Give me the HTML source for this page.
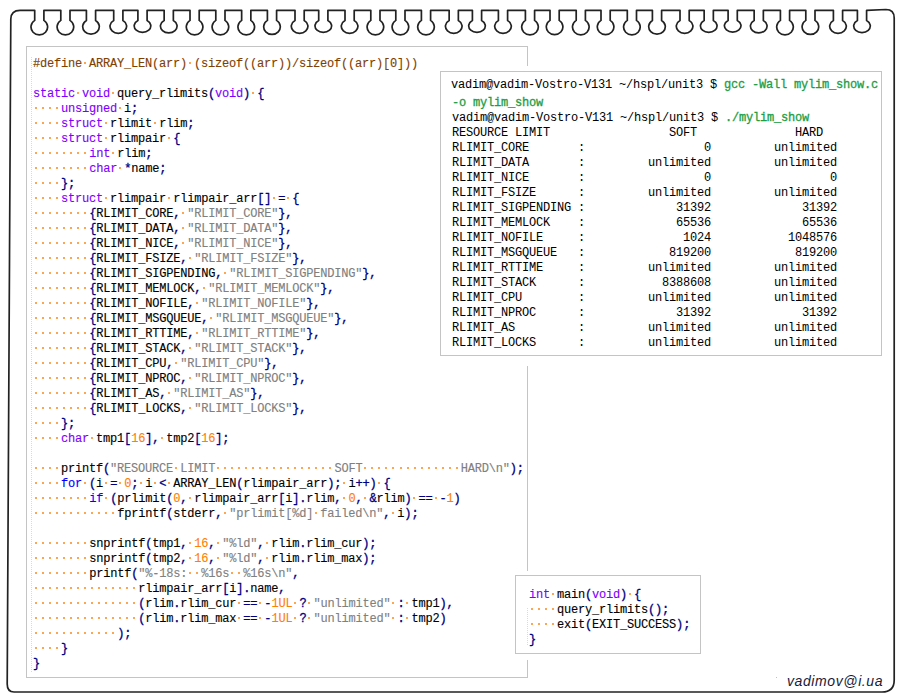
<!DOCTYPE html>
<html><head><meta charset="utf-8"><style>
html,body{margin:0;padding:0;background:#fff;}
body{width:900px;height:700px;overflow:hidden;position:relative;}
.nb{position:absolute;left:0;top:0;}
.panel{position:absolute;box-sizing:border-box;border:1px solid #c4c4c4;background:#fff;}
.wpad{position:absolute;background:#fff;}
.guide{position:absolute;width:1px;background:repeating-linear-gradient(to bottom,#dadada 0,#dadada 1px,transparent 1px,transparent 2px);}
.code,.term{position:absolute;font-family:"Liberation Mono",monospace;font-size:12px;letter-spacing:-0.200px;white-space:pre;color:#000;-webkit-text-stroke:0.12px currentColor;}
.term{-webkit-text-stroke:0px;}
.ln{position:absolute;left:0;height:15px;line-height:15px;white-space:pre;}
.pp{color:#804000}
.ty{color:#8000ff}
.in{color:#0000ff}
.nu{color:#ff8000}
.st{color:#808080}
.op{color:#000080;-webkit-text-stroke:0.3px #000080}
.gr{color:#1c9e44;-webkit-text-stroke:0.3px #1c9e44}
i.d{font-style:normal;position:relative;}
i.d::after{content:"";position:absolute;left:2px;top:5px;width:2px;height:2px;background:#ffa54f;}
.sig{position:absolute;left:787px;top:672px;font-family:"Liberation Sans",sans-serif;font-style:italic;font-size:14px;letter-spacing:0.6px;line-height:18px;color:#1a1a3a;}
</style></head><body>
<svg class="nb" width="900" height="700" viewBox="0 0 900 700"><path d="M10.8,19 Q11,10.3 20,10.3 L34.70,10.3 L34.70,20.40 A8.3,7.94 0 1 0 43.90,20.40 L43.90,10.3 L60.80,10.3 L60.80,20.40 A8.3,7.94 0 1 0 70.00,20.40 L70.00,10.3 L86.40,10.3 L86.40,20.40 A8.3,7.50 0 1 0 95.60,20.40 L95.60,10.3 L113.70,10.3 L113.70,20.40 A8.3,7.07 0 1 0 122.90,20.40 L122.90,10.3 L137.90,10.3 L137.90,20.40 A8.3,6.58 0 1 0 147.10,20.40 L147.10,10.3 L164.15,10.3 L164.15,20.40 A8.3,6.79 0 1 0 173.35,20.40 L173.35,10.3 L190.00,10.3 L190.00,20.40 A8.3,7.94 0 1 0 199.20,20.40 L199.20,10.3 L215.80,10.3 L215.80,20.40 A8.3,7.94 0 1 0 225.00,20.40 L225.00,10.3 L241.65,10.3 L241.65,20.40 A8.3,7.94 0 1 0 250.85,20.40 L250.85,10.3 L267.40,10.3 L267.40,20.40 A8.3,7.67 0 1 0 276.60,20.40 L276.60,10.3 L295.00,10.3 L295.00,20.40 A8.3,7.07 0 1 0 304.20,20.40 L304.20,10.3 L318.70,10.3 L318.70,20.40 A8.3,6.58 0 1 0 327.90,20.40 L327.90,10.3 L345.00,10.3 L345.00,20.40 A8.3,7.07 0 1 0 354.20,20.40 L354.20,10.3 L370.80,10.3 L370.80,20.40 A8.3,7.94 0 1 0 380.00,20.40 L380.00,10.3 L395.80,10.3 L395.80,20.40 A8.3,7.94 0 1 0 405.00,20.40 L405.00,10.3 L421.40,10.3 L421.40,20.40 A8.3,7.94 0 1 0 430.60,20.40 L430.60,10.3 L449.15,10.3 L449.15,20.40 A8.3,7.07 0 1 0 458.35,20.40 L458.35,10.3 L472.40,10.3 L472.40,20.40 A8.3,6.58 0 1 0 481.60,20.40 L481.60,10.3 L498.40,10.3 L498.40,20.40 A8.3,7.07 0 1 0 507.60,20.40 L507.60,10.3 L525.40,10.3 L525.40,20.40 A8.3,7.94 0 1 0 534.60,20.40 L534.60,10.3 L550.00,10.3 L550.00,20.40 A8.3,7.78 0 1 0 559.20,20.40 L559.20,10.3 L576.20,10.3 L576.20,20.40 A8.3,7.94 0 1 0 585.40,20.40 L585.40,10.3 L601.00,10.3 L601.00,20.40 A8.3,7.78 0 1 0 610.20,20.40 L610.20,10.3 L627.30,10.3 L627.30,20.40 A8.3,7.94 0 1 0 636.50,20.40 L636.50,10.3 L652.40,10.3 L652.40,20.40 A8.3,7.50 0 1 0 661.60,20.40 L661.60,10.3 L680.00,10.3 L680.00,20.40 A8.3,7.07 0 1 0 689.20,20.40 L689.20,10.3 L704.15,10.3 L704.15,20.40 A8.3,6.58 0 1 0 713.35,20.40 L713.35,10.3 L728.10,10.3 L728.10,20.40 A8.3,6.41 0 1 0 737.30,20.40 L737.30,10.3 L754.15,10.3 L754.15,20.40 A8.3,6.79 0 1 0 763.35,20.40 L763.35,10.3 L780.40,10.3 L780.40,20.40 A8.3,7.94 0 1 0 789.60,20.40 L789.60,10.3 L805.80,10.3 L805.80,20.40 A8.3,7.67 0 1 0 815.00,20.40 L815.00,10.3 L833.40,10.3 L833.40,20.40 A8.3,7.07 0 1 0 842.60,20.40 L842.60,10.3 L857.40,10.3 L857.40,20.40 A8.3,6.63 0 1 0 866.60,20.40 L866.60,10.3 L886,9.5 Q894.2,9.5 894.2,18 L894.2,680 Q894.2,692 882,692 L14,692 Q7.2,692 7.2,684 Z" fill="none" stroke="#222" stroke-width="1.7" stroke-linejoin="round"/></svg>
<div class="panel" style="left:26px;top:46px;width:502px;height:632px"></div>
<div class="guide" style="left:31px;top:57px;height:615px"></div>
<div class="code" style="left:33px;top:0"><div class="ln" style="top:57px"><span class="pp">#define</span><i class="d"> </i><span class="pp">ARRAY_LEN(arr)</span><i class="d"> </i><span class="pp">(sizeof((arr))/sizeof((arr)[0]))</span></div><div class="ln" style="top:72px"></div><div class="ln" style="top:87px"><span class="ty">static</span><i class="d"> </i><span class="ty">void</span><i class="d"> </i>query_rlimits<span class="op">(</span><span class="ty">void</span><span class="op">)</span><i class="d"> </i><span class="op">{</span></div><div class="ln" style="top:102px"><i class="d"> </i><i class="d"> </i><i class="d"> </i><i class="d"> </i><span class="ty">unsigned</span><i class="d"> </i>i<span class="op">;</span></div><div class="ln" style="top:117px"><i class="d"> </i><i class="d"> </i><i class="d"> </i><i class="d"> </i><span class="ty">struct</span><i class="d"> </i>rlimit<i class="d"> </i>rlim<span class="op">;</span></div><div class="ln" style="top:132px"><i class="d"> </i><i class="d"> </i><i class="d"> </i><i class="d"> </i><span class="ty">struct</span><i class="d"> </i>rlimpair<i class="d"> </i><span class="op">{</span></div><div class="ln" style="top:147px"><i class="d"> </i><i class="d"> </i><i class="d"> </i><i class="d"> </i><i class="d"> </i><i class="d"> </i><i class="d"> </i><i class="d"> </i><span class="ty">int</span><i class="d"> </i>rlim<span class="op">;</span></div><div class="ln" style="top:162px"><i class="d"> </i><i class="d"> </i><i class="d"> </i><i class="d"> </i><i class="d"> </i><i class="d"> </i><i class="d"> </i><i class="d"> </i><span class="ty">char</span><i class="d"> </i><span class="op">*</span>name<span class="op">;</span></div><div class="ln" style="top:177px"><i class="d"> </i><i class="d"> </i><i class="d"> </i><i class="d"> </i><span class="op">}</span><span class="op">;</span></div><div class="ln" style="top:192px"><i class="d"> </i><i class="d"> </i><i class="d"> </i><i class="d"> </i><span class="ty">struct</span><i class="d"> </i>rlimpair<i class="d"> </i>rlimpair_arr<span class="op">[</span><span class="op">]</span><i class="d"> </i><span class="op">=</span><i class="d"> </i><span class="op">{</span></div><div class="ln" style="top:207px"><i class="d"> </i><i class="d"> </i><i class="d"> </i><i class="d"> </i><i class="d"> </i><i class="d"> </i><i class="d"> </i><i class="d"> </i><span class="op">{</span>RLIMIT_CORE<span class="op">,</span><i class="d"> </i><span class="st">"RLIMIT_CORE"</span><span class="op">}</span><span class="op">,</span></div><div class="ln" style="top:222px"><i class="d"> </i><i class="d"> </i><i class="d"> </i><i class="d"> </i><i class="d"> </i><i class="d"> </i><i class="d"> </i><i class="d"> </i><span class="op">{</span>RLIMIT_DATA<span class="op">,</span><i class="d"> </i><span class="st">"RLIMIT_DATA"</span><span class="op">}</span><span class="op">,</span></div><div class="ln" style="top:237px"><i class="d"> </i><i class="d"> </i><i class="d"> </i><i class="d"> </i><i class="d"> </i><i class="d"> </i><i class="d"> </i><i class="d"> </i><span class="op">{</span>RLIMIT_NICE<span class="op">,</span><i class="d"> </i><span class="st">"RLIMIT_NICE"</span><span class="op">}</span><span class="op">,</span></div><div class="ln" style="top:252px"><i class="d"> </i><i class="d"> </i><i class="d"> </i><i class="d"> </i><i class="d"> </i><i class="d"> </i><i class="d"> </i><i class="d"> </i><span class="op">{</span>RLIMIT_FSIZE<span class="op">,</span><i class="d"> </i><span class="st">"RLIMIT_FSIZE"</span><span class="op">}</span><span class="op">,</span></div><div class="ln" style="top:267px"><i class="d"> </i><i class="d"> </i><i class="d"> </i><i class="d"> </i><i class="d"> </i><i class="d"> </i><i class="d"> </i><i class="d"> </i><span class="op">{</span>RLIMIT_SIGPENDING<span class="op">,</span><i class="d"> </i><span class="st">"RLIMIT_SIGPENDING"</span><span class="op">}</span><span class="op">,</span></div><div class="ln" style="top:282px"><i class="d"> </i><i class="d"> </i><i class="d"> </i><i class="d"> </i><i class="d"> </i><i class="d"> </i><i class="d"> </i><i class="d"> </i><span class="op">{</span>RLIMIT_MEMLOCK<span class="op">,</span><i class="d"> </i><span class="st">"RLIMIT_MEMLOCK"</span><span class="op">}</span><span class="op">,</span></div><div class="ln" style="top:297px"><i class="d"> </i><i class="d"> </i><i class="d"> </i><i class="d"> </i><i class="d"> </i><i class="d"> </i><i class="d"> </i><i class="d"> </i><span class="op">{</span>RLIMIT_NOFILE<span class="op">,</span><i class="d"> </i><span class="st">"RLIMIT_NOFILE"</span><span class="op">}</span><span class="op">,</span></div><div class="ln" style="top:312px"><i class="d"> </i><i class="d"> </i><i class="d"> </i><i class="d"> </i><i class="d"> </i><i class="d"> </i><i class="d"> </i><i class="d"> </i><span class="op">{</span>RLIMIT_MSGQUEUE<span class="op">,</span><i class="d"> </i><span class="st">"RLIMIT_MSGQUEUE"</span><span class="op">}</span><span class="op">,</span></div><div class="ln" style="top:327px"><i class="d"> </i><i class="d"> </i><i class="d"> </i><i class="d"> </i><i class="d"> </i><i class="d"> </i><i class="d"> </i><i class="d"> </i><span class="op">{</span>RLIMIT_RTTIME<span class="op">,</span><i class="d"> </i><span class="st">"RLIMIT_RTTIME"</span><span class="op">}</span><span class="op">,</span></div><div class="ln" style="top:342px"><i class="d"> </i><i class="d"> </i><i class="d"> </i><i class="d"> </i><i class="d"> </i><i class="d"> </i><i class="d"> </i><i class="d"> </i><span class="op">{</span>RLIMIT_STACK<span class="op">,</span><i class="d"> </i><span class="st">"RLIMIT_STACK"</span><span class="op">}</span><span class="op">,</span></div><div class="ln" style="top:357px"><i class="d"> </i><i class="d"> </i><i class="d"> </i><i class="d"> </i><i class="d"> </i><i class="d"> </i><i class="d"> </i><i class="d"> </i><span class="op">{</span>RLIMIT_CPU<span class="op">,</span><i class="d"> </i><span class="st">"RLIMIT_CPU"</span><span class="op">}</span><span class="op">,</span></div><div class="ln" style="top:372px"><i class="d"> </i><i class="d"> </i><i class="d"> </i><i class="d"> </i><i class="d"> </i><i class="d"> </i><i class="d"> </i><i class="d"> </i><span class="op">{</span>RLIMIT_NPROC<span class="op">,</span><i class="d"> </i><span class="st">"RLIMIT_NPROC"</span><span class="op">}</span><span class="op">,</span></div><div class="ln" style="top:387px"><i class="d"> </i><i class="d"> </i><i class="d"> </i><i class="d"> </i><i class="d"> </i><i class="d"> </i><i class="d"> </i><i class="d"> </i><span class="op">{</span>RLIMIT_AS<span class="op">,</span><i class="d"> </i><span class="st">"RLIMIT_AS"</span><span class="op">}</span><span class="op">,</span></div><div class="ln" style="top:402px"><i class="d"> </i><i class="d"> </i><i class="d"> </i><i class="d"> </i><i class="d"> </i><i class="d"> </i><i class="d"> </i><i class="d"> </i><span class="op">{</span>RLIMIT_LOCKS<span class="op">,</span><i class="d"> </i><span class="st">"RLIMIT_LOCKS"</span><span class="op">}</span><span class="op">,</span></div><div class="ln" style="top:417px"><i class="d"> </i><i class="d"> </i><i class="d"> </i><i class="d"> </i><span class="op">}</span><span class="op">;</span></div><div class="ln" style="top:432px"><i class="d"> </i><i class="d"> </i><i class="d"> </i><i class="d"> </i><span class="ty">char</span><i class="d"> </i>tmp1<span class="op">[</span><span class="nu">16</span><span class="op">]</span><span class="op">,</span><i class="d"> </i>tmp2<span class="op">[</span><span class="nu">16</span><span class="op">]</span><span class="op">;</span></div><div class="ln" style="top:447px"></div><div class="ln" style="top:462px"><i class="d"> </i><i class="d"> </i><i class="d"> </i><i class="d"> </i>printf<span class="op">(</span><span class="st">"RESOURCE</span><i class="d"> </i><span class="st">LIMIT</span><i class="d"> </i><i class="d"> </i><i class="d"> </i><i class="d"> </i><i class="d"> </i><i class="d"> </i><i class="d"> </i><i class="d"> </i><i class="d"> </i><i class="d"> </i><i class="d"> </i><i class="d"> </i><i class="d"> </i><i class="d"> </i><i class="d"> </i><i class="d"> </i><i class="d"> </i><span class="st">SOFT</span><i class="d"> </i><i class="d"> </i><i class="d"> </i><i class="d"> </i><i class="d"> </i><i class="d"> </i><i class="d"> </i><i class="d"> </i><i class="d"> </i><i class="d"> </i><i class="d"> </i><i class="d"> </i><i class="d"> </i><i class="d"> </i><span class="st">HARD\n"</span><span class="op">)</span><span class="op">;</span></div><div class="ln" style="top:477px"><i class="d"> </i><i class="d"> </i><i class="d"> </i><i class="d"> </i><span class="in">for</span><i class="d"> </i><span class="op">(</span>i<i class="d"> </i><span class="op">=</span><i class="d"> </i><span class="nu">0</span><span class="op">;</span><i class="d"> </i>i<i class="d"> </i><span class="op">&lt;</span><i class="d"> </i>ARRAY_LEN<span class="op">(</span>rlimpair_arr<span class="op">)</span><span class="op">;</span><i class="d"> </i>i<span class="op">+</span><span class="op">+</span><span class="op">)</span><i class="d"> </i><span class="op">{</span></div><div class="ln" style="top:492px"><i class="d"> </i><i class="d"> </i><i class="d"> </i><i class="d"> </i><i class="d"> </i><i class="d"> </i><i class="d"> </i><i class="d"> </i><span class="in">if</span><i class="d"> </i><span class="op">(</span>prlimit<span class="op">(</span><span class="nu">0</span><span class="op">,</span><i class="d"> </i>rlimpair_arr<span class="op">[</span>i<span class="op">]</span><span class="op">.</span>rlim<span class="op">,</span><i class="d"> </i><span class="nu">0</span><span class="op">,</span><i class="d"> </i><span class="op">&amp;</span>rlim<span class="op">)</span><i class="d"> </i><span class="op">=</span><span class="op">=</span><i class="d"> </i><span class="op">-</span><span class="nu">1</span><span class="op">)</span></div><div class="ln" style="top:507px"><i class="d"> </i><i class="d"> </i><i class="d"> </i><i class="d"> </i><i class="d"> </i><i class="d"> </i><i class="d"> </i><i class="d"> </i><i class="d"> </i><i class="d"> </i><i class="d"> </i><i class="d"> </i>fprintf<span class="op">(</span>stderr<span class="op">,</span><i class="d"> </i><span class="st">"prlimit[%d]</span><i class="d"> </i><span class="st">failed\n"</span><span class="op">,</span><i class="d"> </i>i<span class="op">)</span><span class="op">;</span></div><div class="ln" style="top:522px"></div><div class="ln" style="top:537px"><i class="d"> </i><i class="d"> </i><i class="d"> </i><i class="d"> </i><i class="d"> </i><i class="d"> </i><i class="d"> </i><i class="d"> </i>snprintf<span class="op">(</span>tmp1<span class="op">,</span><i class="d"> </i><span class="nu">16</span><span class="op">,</span><i class="d"> </i><span class="st">"%ld"</span><span class="op">,</span><i class="d"> </i>rlim<span class="op">.</span>rlim_cur<span class="op">)</span><span class="op">;</span></div><div class="ln" style="top:552px"><i class="d"> </i><i class="d"> </i><i class="d"> </i><i class="d"> </i><i class="d"> </i><i class="d"> </i><i class="d"> </i><i class="d"> </i>snprintf<span class="op">(</span>tmp2<span class="op">,</span><i class="d"> </i><span class="nu">16</span><span class="op">,</span><i class="d"> </i><span class="st">"%ld"</span><span class="op">,</span><i class="d"> </i>rlim<span class="op">.</span>rlim_max<span class="op">)</span><span class="op">;</span></div><div class="ln" style="top:567px"><i class="d"> </i><i class="d"> </i><i class="d"> </i><i class="d"> </i><i class="d"> </i><i class="d"> </i><i class="d"> </i><i class="d"> </i>printf<span class="op">(</span><span class="st">"%-18s:</span><i class="d"> </i><i class="d"> </i><span class="st">%16s</span><i class="d"> </i><i class="d"> </i><span class="st">%16s\n"</span><span class="op">,</span></div><div class="ln" style="top:582px"><i class="d"> </i><i class="d"> </i><i class="d"> </i><i class="d"> </i><i class="d"> </i><i class="d"> </i><i class="d"> </i><i class="d"> </i><i class="d"> </i><i class="d"> </i><i class="d"> </i><i class="d"> </i><i class="d"> </i><i class="d"> </i><i class="d"> </i>rlimpair_arr<span class="op">[</span>i<span class="op">]</span><span class="op">.</span>name<span class="op">,</span></div><div class="ln" style="top:597px"><i class="d"> </i><i class="d"> </i><i class="d"> </i><i class="d"> </i><i class="d"> </i><i class="d"> </i><i class="d"> </i><i class="d"> </i><i class="d"> </i><i class="d"> </i><i class="d"> </i><i class="d"> </i><i class="d"> </i><i class="d"> </i><i class="d"> </i><span class="op">(</span>rlim<span class="op">.</span>rlim_cur<i class="d"> </i><span class="op">=</span><span class="op">=</span><i class="d"> </i><span class="op">-</span><span class="nu">1UL</span><i class="d"> </i><span class="op">?</span><i class="d"> </i><span class="st">"unlimited"</span><i class="d"> </i><span class="op">:</span><i class="d"> </i>tmp1<span class="op">)</span><span class="op">,</span></div><div class="ln" style="top:612px"><i class="d"> </i><i class="d"> </i><i class="d"> </i><i class="d"> </i><i class="d"> </i><i class="d"> </i><i class="d"> </i><i class="d"> </i><i class="d"> </i><i class="d"> </i><i class="d"> </i><i class="d"> </i><i class="d"> </i><i class="d"> </i><i class="d"> </i><span class="op">(</span>rlim<span class="op">.</span>rlim_max<i class="d"> </i><span class="op">=</span><span class="op">=</span><i class="d"> </i><span class="op">-</span><span class="nu">1UL</span><i class="d"> </i><span class="op">?</span><i class="d"> </i><span class="st">"unlimited"</span><i class="d"> </i><span class="op">:</span><i class="d"> </i>tmp2<span class="op">)</span></div><div class="ln" style="top:627px"><i class="d"> </i><i class="d"> </i><i class="d"> </i><i class="d"> </i><i class="d"> </i><i class="d"> </i><i class="d"> </i><i class="d"> </i><i class="d"> </i><i class="d"> </i><i class="d"> </i><i class="d"> </i><span class="op">)</span><span class="op">;</span></div><div class="ln" style="top:642px"><i class="d"> </i><i class="d"> </i><i class="d"> </i><i class="d"> </i><span class="op">}</span></div><div class="ln" style="top:657px"><span class="op">}</span></div></div>
<div class="wpad" style="left:435px;top:66px;width:452px;height:300px"></div>
<div class="panel" style="left:440px;top:71px;width:442px;height:285px"></div>
<div class="term" style="left:452px;top:0"><div class="ln" style="top:78px;left:-1px">vadim@vadim-Vostro-V131 ~/hspl/unit3 $ <span class="gr">gcc -Wall mylim_show.c</span></div><div class="ln" style="top:96px;left:0px"><span class="gr">-o mylim_show</span></div><div class="ln" style="top:111px;left:0px">vadim@vadim-Vostro-V131 ~/hspl/unit3 $ <span class="gr">./mylim_show</span></div><div class="ln" style="top:126px;left:0px">RESOURCE LIMIT                 SOFT              HARD</div><div class="ln" style="top:141px;left:0px">RLIMIT_CORE       :                 0         unlimited</div><div class="ln" style="top:156px;left:0px">RLIMIT_DATA       :         unlimited         unlimited</div><div class="ln" style="top:171px;left:0px">RLIMIT_NICE       :                 0                 0</div><div class="ln" style="top:186px;left:0px">RLIMIT_FSIZE      :         unlimited         unlimited</div><div class="ln" style="top:201px;left:0px">RLIMIT_SIGPENDING :             31392             31392</div><div class="ln" style="top:216px;left:0px">RLIMIT_MEMLOCK    :             65536             65536</div><div class="ln" style="top:231px;left:0px">RLIMIT_NOFILE     :              1024           1048576</div><div class="ln" style="top:246px;left:0px">RLIMIT_MSGQUEUE   :            819200            819200</div><div class="ln" style="top:261px;left:0px">RLIMIT_RTTIME     :         unlimited         unlimited</div><div class="ln" style="top:276px;left:0px">RLIMIT_STACK      :           8388608         unlimited</div><div class="ln" style="top:291px;left:0px">RLIMIT_CPU        :         unlimited         unlimited</div><div class="ln" style="top:306px;left:0px">RLIMIT_NPROC      :             31392             31392</div><div class="ln" style="top:321px;left:0px">RLIMIT_AS         :         unlimited         unlimited</div><div class="ln" style="top:336px;left:0px">RLIMIT_LOCKS      :         unlimited         unlimited</div></div>
<div class="wpad" style="left:510px;top:571px;width:196px;height:89px"></div>
<div class="panel" style="left:515px;top:575px;width:186px;height:79px"></div>
<div class="guide" style="left:527px;top:608px;height:38px"></div>
<div class="code" style="left:529px;top:0"><div class="ln" style="top:588px"><span class="ty">int</span><i class="d"> </i>main<span class="op">(</span><span class="ty">void</span><span class="op">)</span><i class="d"> </i><span class="op">{</span></div><div class="ln" style="top:603px"><i class="d"> </i><i class="d"> </i><i class="d"> </i><i class="d"> </i>query_rlimits<span class="op">(</span><span class="op">)</span><span class="op">;</span></div><div class="ln" style="top:618px"><i class="d"> </i><i class="d"> </i><i class="d"> </i><i class="d"> </i>exit<span class="op">(</span>EXIT_SUCCESS<span class="op">)</span><span class="op">;</span></div><div class="ln" style="top:633px"><span class="op">}</span></div></div>
<div class="sig">vadimov@i.ua</div>
<div style="position:absolute;left:776px;top:677px;width:1px;height:1px;background:#ffb060"></div>
</body></html>
